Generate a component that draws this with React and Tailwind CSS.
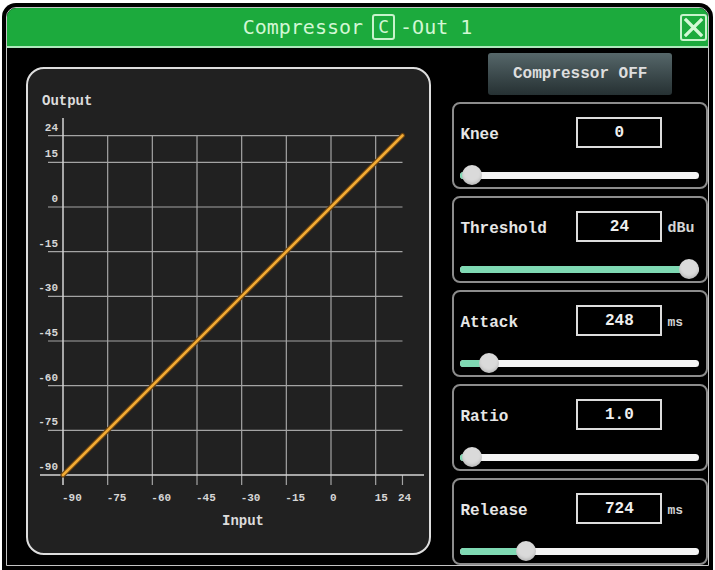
import React from "react";

const S = 268 / 90;
const X = (v) => 331 + v * S;
const Y = (v) => 207 - v * S;

const yVals = [24, 15, 0, -15, -30, -45, -60, -75, -90];
const xVals = [-90, -75, -60, -45, -30, -15, 0, 15, 24];

function Chart() {
  return (
    <div className="mt-[19px] w-[406px] h-[488px] rounded-[18px] border-2 border-[#dedede] bg-[#212121] overflow-hidden">
      <svg width="402" height="484" viewBox="28 69 402 484" className="block">
        <text x="42" y="105" fill="#dcdcdc" fontFamily="'Liberation Mono', monospace" fontWeight="700" fontSize="14">Output</text>
        {yVals.slice(0, 8).map((v) => (
          <line key={"h" + v} x1="48" x2="402.5" y1={Y(v)} y2={Y(v)} stroke="#a4a4a4" strokeWidth="1.2" />
        ))}
        {xVals.slice(1, 8).map((v) => (
          <line key={"v" + v} x1={X(v)} x2={X(v)} y1={Y(24)} y2="485" stroke="#a4a4a4" strokeWidth="1.2" />
        ))}
        <line x1={X(24)} x2={X(24)} y1="475" y2="485" stroke="#a4a4a4" strokeWidth="1.2" />
        <line x1="63" x2="63" y1="118" y2="485" stroke="#d4d4d4" strokeWidth="1.5" />
        <line x1="40" x2="424" y1="475" y2="475" stroke="#d4d4d4" strokeWidth="1.5" />
        {yVals.map((v) => (
          <text key={"yl" + v} x="58" y={Y(v) - 5} textAnchor="end" fill="#d6d6d6" fontFamily="'Liberation Mono', monospace" fontWeight="700" fontSize="11">{v}</text>
        ))}
        {xVals.map((v) => (
          <text key={"xl" + v} x={v === 24 ? 398 : X(v) - 1} y="501" fill="#d6d6d6" fontFamily="'Liberation Mono', monospace" fontWeight="700" fontSize="11">{v}</text>
        ))}
        <text x="243" y="525" textAnchor="middle" fill="#dcdcdc" fontFamily="'Liberation Mono', monospace" fontWeight="700" fontSize="14">Input</text>
        <line x1="63" y1="475" x2="402.5" y2="135.5" stroke="#6a4210" strokeWidth="5" strokeLinecap="round" />
        <line x1="63" y1="475" x2="402.5" y2="135.5" stroke="#f2ab34" strokeWidth="2.6" strokeLinecap="round" />
      </svg>
    </div>
  );
}

function Param({ label, value, unit, pos, unitSmall }) {
  return (
    <div className="h-[87px] rounded-[8px] border-2 border-[#8c8c8c] pt-[13px] flex flex-col">
      <div className="flex items-center h-[31px] pl-[6px]">
        <div className="w-[116px] pt-[4px] text-[16px] font-bold text-[#e6e6e6] font-['Liberation_Mono',monospace] leading-none">{label}</div>
        <div className="w-[86px] h-[31px] border-2 border-[#dcdcdc] flex items-center justify-center pt-[1px] text-[16px] font-bold text-[#f0f0f0] font-['Liberation_Mono',monospace] leading-none">{value}</div>
        {unit && (
          <div className={"ml-[5px] pt-[3px] font-bold text-[#d4d4d4] font-['Liberation_Mono',monospace] leading-none " + (unitSmall ? "text-[13px]" : "text-[15px]")}>{unit}</div>
        )}
      </div>
      <div className="relative ml-[6px] mt-[17px] w-[239px] h-[20px] flex items-center">
        <div className="w-full h-[7px] rounded-full bg-[#f4f4f4] overflow-hidden">
          <div className="h-full bg-[#7fd9b3]" style={{ width: pos + "px" }} />
        </div>
        <div
          className="absolute top-0 w-[20px] h-[20px] rounded-full bg-[#dadada] shadow-[inset_0_-2px_3px_rgba(0,0,0,0.15)]"
          style={{ left: pos - 10 + "px" }}
        />
      </div>
    </div>
  );
}

export default function App() {
  return (
    <div className="w-[715px] h-[570px] bg-white pt-[3px] px-[2px]">
      <div className="h-[567px] bg-black rounded-t-[14px] px-[4px] pt-[4px] pb-[4px]">
        <div className="h-full border border-[#c4c4c4] rounded-t-[10px] overflow-hidden flex flex-col bg-black">
          <div className="h-[40px] shrink-0 bg-[#1caa3d] border-b-2 border-[#aee8bd] grid grid-cols-[1fr_auto_1fr] items-center">
            <div />
            <div className="flex items-center text-[20px] text-[#d2f7d4] font-['DejaVu_Sans_Mono',monospace] leading-none">
              <span>Compressor</span>
              <span className="ml-[9px] mr-[5px] w-[23px] h-[26px] border-2 border-[#c8f3cc] rounded-[3px] flex items-center justify-center text-[18px]">C</span>
              <span>-Out 1</span>
            </div>
            <div className="justify-self-end mr-[1px] w-[27px] h-[27px] border-2 border-[#c8f3cc] rounded-[3px] flex items-center justify-center">
              <svg width="21" height="21" viewBox="0 0 21 21">
                <path d="M3 3 L18 18 M18 3 L3 18" stroke="#d4f8d6" strokeWidth="3.2" strokeLinecap="square" />
              </svg>
            </div>
          </div>
          <div className="flex pl-[19px]">
            <Chart />
            <div className="ml-[21px] w-[256px] pt-[5px] flex flex-col">
              <div className="mx-auto w-[184px] h-[42px] rounded-[3px] bg-gradient-to-b from-[#56676a] to-[#263133] flex items-center justify-center text-[16px] font-bold text-[#dedede] font-['Liberation_Mono',monospace]">
                Compressor OFF
              </div>
              <div className="mt-[7px] flex flex-col gap-[7px]">
                <Param label="Knee" value="0" pos={12} />
                <Param label="Threshold" value="24" unit="dBu" pos={229} />
                <Param label="Attack" value="248" unit="ms" unitSmall pos={29} />
                <Param label="Ratio" value="1.0" pos={12} />
                <Param label="Release" value="724" unit="ms" unitSmall pos={66} />
              </div>
            </div>
          </div>
        </div>
      </div>
    </div>
  );
}
